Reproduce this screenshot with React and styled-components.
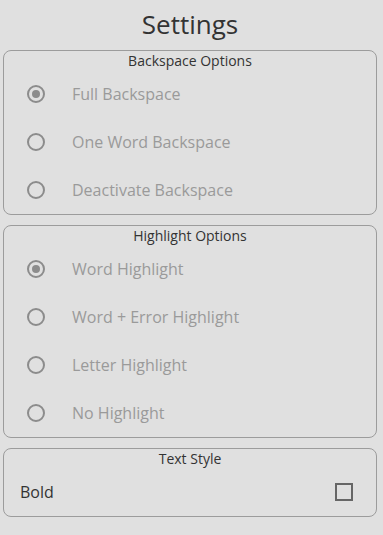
import React, { useState } from "react";
import styled, { createGlobalStyle } from "styled-components";

const GlobalStyle = createGlobalStyle`
  html, body {
    margin: 0;
    padding: 0;
    background: #e0e0e0;
    font-family: "Open Sans", "Noto Sans", sans-serif;
  }
`;

const backspaceOptions = [
  "Full Backspace",
  "One Word Backspace",
  "Deactivate Backspace",
];

const highlightOptions = [
  "Word Highlight",
  "Word + Error Highlight",
  "Letter Highlight",
  "No Highlight",
];

const App = () => {
  const [backspace, setBackspace] = useState(0);
  const [highlight, setHighlight] = useState(0);
  const [bold, setBold] = useState(false);

  return (
    <Page>
      <GlobalStyle />
      <Title>Settings</Title>
      <Group>
        <GroupTitle>Backspace Options</GroupTitle>
        {backspaceOptions.map((label, i) => (
          <RadioRow key={label}>
            <Radio
              type="radio"
              name="backspace"
              checked={backspace === i}
              onChange={() => setBackspace(i)}
            />
            <RadioLabel>{label}</RadioLabel>
          </RadioRow>
        ))}
      </Group>
      <Group>
        <GroupTitle>Highlight Options</GroupTitle>
        {highlightOptions.map((label, i) => (
          <RadioRow key={label}>
            <Radio
              type="radio"
              name="highlight"
              checked={highlight === i}
              onChange={() => setHighlight(i)}
            />
            <RadioLabel>{label}</RadioLabel>
          </RadioRow>
        ))}
      </Group>
      <Group>
        <GroupTitle>Text Style</GroupTitle>
        <CheckRow>
          <span>Bold</span>
          <Check
            type="checkbox"
            checked={bold}
            onChange={() => setBold(!bold)}
          />
        </CheckRow>
      </Group>
    </Page>
  );
};
export default App;

const Page = styled.div`
  display: flex;
  flex-direction: column;
  gap: 10px;
  padding: 0 6px 0 3px;
`;

const Title = styled.h1`
  margin: 0;
  padding-top: 6px;
  height: 34px;
  line-height: 36px;
  font-size: 26px;
  font-weight: 400;
  color: #333;
  text-align: center;
`;

const Group = styled.div`
  display: flex;
  flex-direction: column;
  border: 1px solid #9c9c9c;
  border-radius: 8px;
`;

const GroupTitle = styled.div`
  height: 19px;
  line-height: 20px;
  font-size: 14px;
  color: #333;
  text-align: center;
`;

const RadioRow = styled.label`
  display: flex;
  align-items: center;
  height: 48px;
  padding-left: 23px;
  cursor: pointer;
`;

const Radio = styled.input`
  appearance: none;
  margin: 0;
  width: 18px;
  height: 18px;
  border: 2px solid #8c8c8c;
  border-radius: 50%;
  box-sizing: border-box;
  display: grid;
  place-items: center;
  cursor: pointer;
  &::after {
    content: "";
    width: 8px;
    height: 8px;
    border-radius: 50%;
    background: #8c8c8c;
    transform: scale(0);
  }
  &:checked::after {
    transform: scale(1);
  }
`;

const RadioLabel = styled.span`
  margin-left: 27px;
  font-size: 16px;
  color: #9a9a9a;
`;

const CheckRow = styled.label`
  display: flex;
  align-items: center;
  justify-content: space-between;
  height: 48px;
  padding: 0 23px 0 16px;
  font-size: 16px;
  color: #333;
  cursor: pointer;
`;

const Check = styled.input`
  appearance: none;
  margin: 0;
  width: 18px;
  height: 18px;
  box-sizing: border-box;
  border: 2px solid #666;
  cursor: pointer;
  &:checked {
    background: #666;
  }
`;
